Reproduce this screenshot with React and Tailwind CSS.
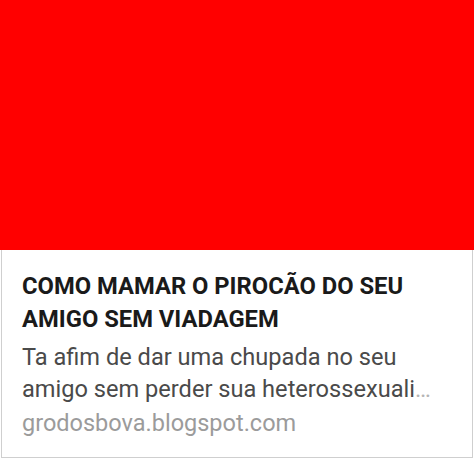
import React from 'react';

const LinkPreview = () => {
    return (
        <div className="w-[474px] h-[458px] bg-white" style={{ fontFamily: 'Roboto, "Liberation Sans", sans-serif' }}>
            {/* Image area */}
            <div className="h-[250px] bg-[#ff0000]"></div>

            {/* Text part */}
            <div className="mx-[1px] h-[208px] border-x border-b border-[#cfcfcf] pl-[20px] pr-[14px] pt-[20px]">
                <h2 className="text-[23.75px] leading-[33px] font-bold text-[#1a1a1a]">
                    COMO MAMAR O PIROCÃO DO SEU AMIGO SEM VIADAGEM
                </h2>
                <p className="mt-[5px] text-[23.6px] leading-[32px] text-[#4a4a4a]">
                    Ta afim de dar uma chupada no seu amigo sem perder sua heterossexuali<span className="text-[#b5b5b5]">…</span>
                </p>
                <p className="mt-[3px] text-[23.5px] leading-[30px] text-[#9b9b9b]">grodosbova.blogspot.com</p>
            </div>
        </div>
    );
};

export default function App() {
    return <LinkPreview />;
}
